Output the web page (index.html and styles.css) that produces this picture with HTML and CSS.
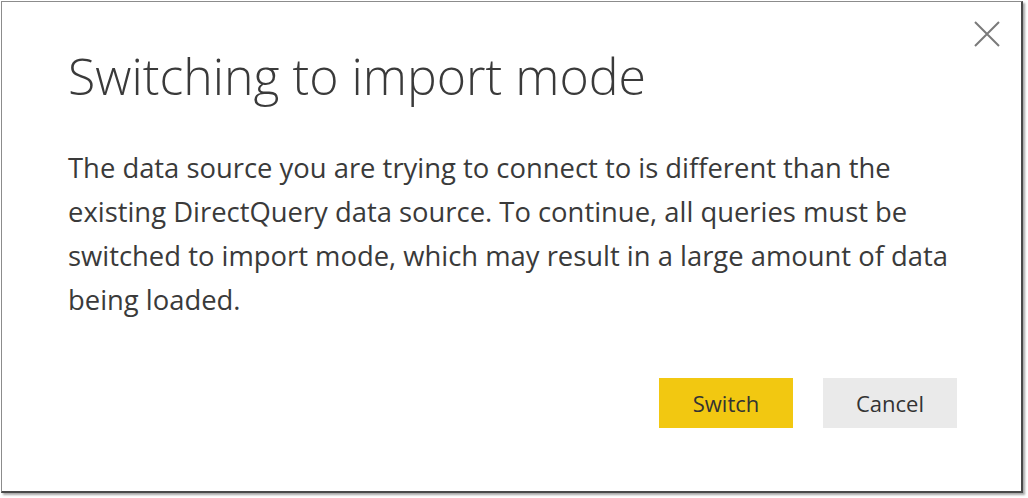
FILE: index.html
```html
<!DOCTYPE html>
<html lang="en">
<head>
<meta charset="utf-8">
<title>Switching to import mode</title>
<link rel="stylesheet" href="styles.css">
</head>
<body>
<div class="dialog">
  <button class="close" aria-label="Close">
    <svg width="26" height="26" viewBox="0 0 26 26"><path d="M1 1 L25 25 M25 1 L1 25" stroke="#7a7a7a" stroke-width="2" fill="none"/></svg>
  </button>
  <h1 class="title">Switching to import mode</h1>
  <p class="message">The data source you are trying to connect to is different than the<br>existing DirectQuery data source. To continue, all queries must be<br>switched to import mode, which may result in a large amount of data<br>being loaded.</p>
  <div class="actions">
    <button class="btn primary">Switch</button>
    <button class="btn secondary">Cancel</button>
  </div>
</div>
</body>
</html>
```
FILE: styles.css
```css
html, body {
  margin: 0;
  padding: 0;
  background: #ffffff;
}
body {
  width: 1028px;
  height: 498px;
  overflow: hidden;
}
.dialog {
  position: relative;
  box-sizing: border-box;
  margin: 1px 0 0 1px;
  width: 1022px;
  height: 492px;
  border-top: 1px solid #8c8c8c;
  border-left: 1px solid #8c8c8c;
  border-right: 2px solid #4a4a4a;
  border-bottom: 2px solid #4a4a4a;
  box-shadow: 2px 2px 2px rgba(0, 0, 0, 0.35);
  padding: 0 64px 0 66px;
  display: flex;
  flex-direction: column;
  font-family: "Open Sans", "Noto Sans", sans-serif;
  color: #3a3a3a;
}
.close {
  position: absolute;
  top: 19px;
  right: 21px;
  width: 26px;
  height: 26px;
  padding: 0;
  border: 0;
  background: transparent;
  display: flex;
}
.title {
  margin: 43px 0 0 0;
  font-size: 50px;
  line-height: 62px;
  font-weight: 300;
  color: #3a3a3a;
  white-space: nowrap;
}
.message {
  margin: 39px 0 0 0;
  font-size: 27.4px;
  line-height: 44px;
  font-weight: 400;
  color: #3a3a3a;
  white-space: nowrap;
}
.actions {
  margin-top: 56px;
  display: flex;
  justify-content: flex-end;
  gap: 30px;
}
.btn {
  width: 134px;
  height: 50px;
  border: 0;
  font-family: "Open Sans", "Noto Sans", sans-serif;
  font-size: 22px;
  color: #333333;
  padding: 0;
}
.primary {
  background: #f2c811;
}
.secondary {
  background: #eaeaea;
}
```
